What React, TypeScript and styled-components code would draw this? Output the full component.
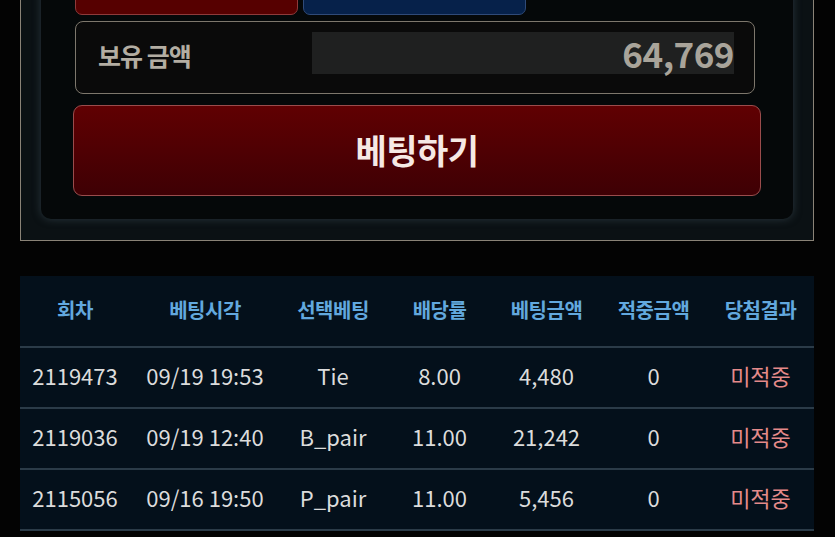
import React from "react";
import styled, { createGlobalStyle } from "styled-components";

const GlobalStyle = createGlobalStyle`
  html, body {
    margin: 0;
    padding: 0;
    background: #030303;
    font-family: "Noto Sans CJK KR", "Noto Sans", sans-serif;
  }
`;

const Page = styled.div`
  margin-top: -86px;
  padding: 0 21px 0 20px;
`;

const OuterBox = styled.section`
  border: 1px solid #8a8377;
  background: #0b1114;
  padding: 20px 20px 21px;
`;

const Panel = styled.div`
  background: #050809;
  border-radius: 10px;
  padding: 20px 32px 23px;
  box-shadow: 0 0 8px rgba(70, 88, 98, 0.55);
`;

const ChoiceRow = styled.div`
  display: grid;
  grid-template-columns: repeat(3, 223px);
  gap: 5px;
  padding-left: 2px;
`;

const Choice = styled.button<{ $tone: "red" | "blue" }>`
  height: 60px;
  border-radius: 7px;
  border: 1px solid ${(p) => (p.$tone === "red" ? "#8e3a3a" : "#2f4a78")};
  background: ${(p) => (p.$tone === "red" ? "#560000" : "#06214a")};
`;

const MoneyBox = styled.div`
  margin: 6px 6px 0 2px;
  display: flex;
  align-items: center;
  border: 1px solid #7d776c;
  border-radius: 8px;
  background: #0a0a0a;
  padding: 10px 20px 19px 22px;
`;

const MoneyLabel = styled.span`
  width: 214px;
  font-size: 25px;
  font-weight: 700;
  color: #b3ada2;
  letter-spacing: -1px;
  padding-top: 4px;
`;

const MoneyValue = styled.div`
  flex: 1;
  height: 42px;
  line-height: 42px;
  background: #1f2020;
  text-align: right;
  font-size: 35px;
  font-weight: 700;
  color: #a9a49a;
  letter-spacing: -0.5px;
`;

const BetButton = styled.button`
  display: block;
  width: 100%;
  height: 91px;
  margin-top: 11px;
  border: 1px solid #9a4c4c;
  border-radius: 9px;
  background: linear-gradient(#600002, #3e0004);
  color: #f6e9e4;
  font-family: inherit;
  font-size: 34px;
  font-weight: 700;
  letter-spacing: -0.5px;
  padding-bottom: 4px;
`;

const Table = styled.table`
  width: 794px;
  margin-top: 35px;
  border-collapse: collapse;
  table-layout: fixed;
  background: #04101b;
  border-bottom: 2px solid #2b3b48;
`;

const HeadCell = styled.th`
  height: 66px;
  padding: 0 0 4px;
  font-size: 20px;
  font-weight: 700;
  color: #62a8de;
  text-align: center;
  letter-spacing: -0.5px;
`;

const Row = styled.tr`
  border-top: 2px solid #2b3b48;
`;

const Cell = styled.td<{ $miss?: boolean }>`
  height: 54px;
  padding: 0 0 5px;
  text-align: center;
  font-size: 22px;
  color: ${(p) => (p.$miss ? "#e58a8a" : "#dcdcdc")};
  white-space: nowrap;
`;

const columns = [110, 150, 106, 107, 107, 107, 107];
const headers = ["회차", "베팅시각", "선택베팅", "배당률", "베팅금액", "적중금액", "당첨결과"];

const rows = [
  ["2119473", "09/19 19:53", "Tie", "8.00", "4,480", "0", "미적중"],
  ["2119036", "09/19 12:40", "B_pair", "11.00", "21,242", "0", "미적중"],
  ["2115056", "09/16 19:50", "P_pair", "11.00", "5,456", "0", "미적중"],
];

export default function App() {
  return (
    <>
      <GlobalStyle />
      <Page>
        <OuterBox>
          <Panel>
            <ChoiceRow>
              <Choice $tone="red" />
              <Choice $tone="blue" />
            </ChoiceRow>
            <MoneyBox>
              <MoneyLabel>보유 금액</MoneyLabel>
              <MoneyValue>64,769</MoneyValue>
            </MoneyBox>
            <BetButton>베팅하기</BetButton>
          </Panel>
        </OuterBox>
        <Table>
          <colgroup>
            {columns.map((w, i) => (
              <col key={i} style={{ width: w }} />
            ))}
          </colgroup>
          <thead>
            <tr>
              {headers.map((h) => (
                <HeadCell key={h}>{h}</HeadCell>
              ))}
            </tr>
          </thead>
          <tbody>
            {rows.map((r) => (
              <Row key={r[0]}>
                {r.map((v, i) => (
                  <Cell key={i} $miss={i === 6}>
                    {v}
                  </Cell>
                ))}
              </Row>
            ))}
          </tbody>
        </Table>
      </Page>
    </>
  );
}
